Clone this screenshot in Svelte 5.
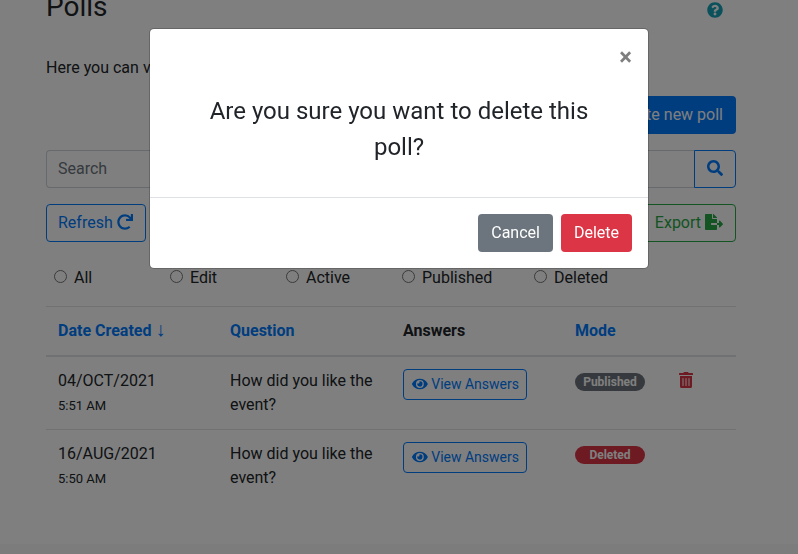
<script>
  const filters = ['All', 'Edit', 'Active', 'Published', 'Deleted'];
  const rows = [
    { date: '04/OCT/2021', time: '5:51 AM', mode: 'Published', cls: 'published', trash: true },
    { date: '16/AUG/2021', time: '5:50 AM', mode: 'Deleted', cls: 'deleted', trash: false }
  ];
</script>

<div class="page">
  <main class="container">
    <div class="title-row">
      <h1>Polls</h1>
      <svg class="help" viewBox="0 0 512 512"><path fill="currentColor" d="M504 256c0 136.997-111.043 248-248 248S8 392.997 8 256C8 119.083 119.043 8 256 8s248 111.083 248 248zM262.655 90c-54.497 0-89.255 22.957-116.549 63.758-3.536 5.286-2.353 12.415 2.715 16.258l34.699 26.31c5.205 3.947 12.621 3.008 16.665-2.122 17.864-22.658 30.113-35.797 57.303-35.797 20.429 0 45.698 13.148 45.698 32.958 0 14.976-12.363 22.667-32.534 33.976C247.128 238.528 216 254.941 216 296v4c0 6.627 5.373 12 12 12h56c6.627 0 12-5.373 12-12v-1.333c0-28.462 83.186-29.647 83.186-106.667 0-58.002-60.165-102-116.531-102zM256 338c-25.365 0-46 20.635-46 46 0 25.364 20.635 46 46 46s46-20.636 46-46c0-25.365-20.635-46-46-46z"/></svg>
    </div>
    <p class="intro">Here you can view and manage your polls.</p>
    <div class="create-row"><button class="btn solid">Create new poll</button></div>
    <div class="search">
      <input placeholder="Search" />
      <button class="btn outline search-btn" aria-label="Search">
        <svg class="ic16" viewBox="0 0 512 512"><path fill="currentColor" d="M505 442.7L405.3 343c-4.5-4.5-10.6-7-17-7H372c27.6-35.3 44-79.7 44-128C416 93.1 322.9 0 208 0S0 93.1 0 208s93.1 208 208 208c48.3 0 92.7-16.4 128-44v16.3c0 6.4 2.5 12.5 7 17l99.7 99.7c9.4 9.4 24.6 9.4 33.9 0l28.3-28.3c9.4-9.4 9.4-24.6.1-34zM208 336c-70.7 0-128-57.2-128-128 0-70.7 57.2-128 128-128 70.7 0 128 57.2 128 128 0 70.7-57.2 128-128 128z"/></svg>
      </button>
    </div>
    <div class="actions">
      <button class="btn outline refresh">Refresh
        <svg class="ic16" viewBox="0 0 512 512"><path fill="currentColor" d="M500.33 0h-47.41a12 12 0 0 0-12 12.57l4 82.76A247.42 247.42 0 0 0 256 8C119.34 8 7.9 119.53 8 256.19 8.1 393.07 119.1 504 256 504a247.1 247.1 0 0 0 166.18-63.91 12 12 0 0 0 .48-17.43l-34-34a12 12 0 0 0-16.38-.55A176 176 0 1 1 402.1 157.8l-101.53-4.87a12 12 0 0 0-12.57 12v47.41a12 12 0 0 0 12 12h200.33a12 12 0 0 0 12-12V12a12 12 0 0 0-12-12z"/></svg>
      </button>
      <button class="btn outline green">Export
        <svg class="ic18" viewBox="0 0 576 512"><path fill="currentColor" d="M384 121.9c0-6.3-2.5-12.4-7-16.9L279.1 7c-4.5-4.5-10.6-7-17-7H256v128h128zM571 308l-95.7-96.4c-10.1-10.1-27.4-3-27.4 11.3V288h-64v64h64v65.2c0 14.3 17.3 21.4 27.4 11.3L571 332c6.6-6.6 6.6-17.4 0-24zm-379 28v-32c0-8.8 7.2-16 16-16h176V160H248c-13.2 0-24-10.8-24-24V0H24C10.7 0 0 10.7 0 24v464c0 13.3 10.7 24 24 24h336c13.3 0 24-10.7 24-24V352H208c-8.8 0-16-7.2-16-16z"/></svg>
      </button>
    </div>
    <div class="filters">
      {#each filters as f}
        <label class="radio"><input type="radio" name="mode" /><span>{f}</span></label>
      {/each}
    </div>
    <table>
      <thead>
        <tr>
          <th class="link">Date Created <span class="arrow">↓</span></th>
          <th class="link">Question</th>
          <th>Answers</th>
          <th class="link">Mode</th>
          <th></th>
        </tr>
      </thead>
      <tbody>
        {#each rows as r}
          <tr>
            <td>{r.date}<small>{r.time}</small></td>
            <td>How did you like the event?</td>
            <td>
              <button class="btn outline sm">
                <svg class="eye" viewBox="0 0 576 512"><path fill="currentColor" d="M572.52 241.4C518.29 135.59 410.93 64 288 64S57.68 135.64 3.48 241.41a32.35 32.35 0 0 0 0 29.19C57.71 376.41 165.07 448 288 448s230.32-71.64 284.52-177.41a32.35 32.35 0 0 0 0-29.19zM288 400a144 144 0 1 1 144-144 143.93 143.93 0 0 1-144 144zm0-240a95.31 95.31 0 0 0-25.31 3.79 47.85 47.85 0 0 1-66.9 66.9A95.78 95.78 0 1 0 288 160z"/></svg>
                View Answers
              </button>
            </td>
            <td><span class="badge {r.cls}">{r.mode}</span></td>
            <td>
              {#if r.trash}
                <svg class="trash" viewBox="0 0 448 512"><path fill="currentColor" d="M32 464a48 48 0 0 0 48 48h288a48 48 0 0 0 48-48V128H32zm272-256a16 16 0 0 1 32 0v224a16 16 0 0 1-32 0zm-96 0a16 16 0 0 1 32 0v224a16 16 0 0 1-32 0zm-96 0a16 16 0 0 1 32 0v224a16 16 0 0 1-32 0zM432 32H312l-9.4-18.7A24 24 0 0 0 281.1 0H166.8a23.72 23.72 0 0 0-21.4 13.3L136 32H16A16 16 0 0 0 0 48v32a16 16 0 0 0 16 16h416a16 16 0 0 0 16-16V48a16 16 0 0 0-16-16z"/></svg>
              {/if}
            </td>
          </tr>
        {/each}
      </tbody>
    </table>
  </main>
  <footer></footer>
</div>

<div class="backdrop"></div>

<div class="dialog" role="dialog">
  <div class="dialog-head"><button class="close" aria-label="Close">×</button></div>
  <div class="dialog-body">Are you sure you want to delete this poll?</div>
  <div class="dialog-foot">
    <button class="btn grey">Cancel</button>
    <button class="btn red">Delete</button>
  </div>
</div>

<style>
  :global(body) {
    margin: 0;
    background: #fff;
    color: #212529;
    font-family: Roboto, "Liberation Sans", sans-serif;
    font-size: 16px;
    line-height: 24px;
    overflow: hidden;
  }
  .page {
    height: 554px;
    display: flex;
    flex-direction: column;
    overflow: hidden;
  }
  .container {
    flex: 1;
    padding: 0 62px 0 46px;
  }
  footer {
    height: 10px;
    background: #f8f9fa;
  }
  .title-row {
    display: flex;
    justify-content: space-between;
    align-items: flex-start;
    height: 50px;
  }
  h1 {
    margin: -14px 0 0;
    font-size: 28px;
    line-height: 42px;
    font-weight: 400;
  }
  .help {
    width: 16px;
    height: 16px;
    margin: 2px 13px 0 0;
    color: #17a2b8;
  }
  .intro {
    margin: 6px 0 0;
  }
  .create-row {
    display: flex;
    justify-content: flex-end;
    margin-top: 16px;
  }
  .btn {
    font: inherit;
    height: 38px;
    padding: 0 12px;
    border: 1px solid transparent;
    border-radius: 4px;
    background: transparent;
    white-space: nowrap;
  }
  .solid { background: #007bff; color: #fff; }
  .outline { border-color: #007bff; color: #007bff; }
  .refresh { padding-left: 11px; }
  .green { border-color: #28a745; color: #28a745; }
  .grey { background: #6c757d; color: #fff; }
  .red { background: #dc3545; color: #fff; }
  .search {
    display: flex;
    margin-top: 16px;
  }
  .search input {
    flex: 1;
    min-width: 0;
    height: 38px;
    box-sizing: border-box;
    padding: 0 12px 2px 11px;
    font: inherit;
    border: 1px solid #ced4da;
    border-right: 0;
    border-radius: 4px 0 0 4px;
    color: #495057;
  }
  .search input::placeholder { color: #6c757d; opacity: 1; }
  .search-btn {
    width: 42px;
    padding: 0;
    border-radius: 0 4px 4px 0;
  }
  .ic16 { width: 16px; height: 16px; vertical-align: -2px; }
  .ic18 { width: 18px; height: 16px; vertical-align: -2px; }
  .actions {
    display: flex;
    justify-content: space-between;
    margin-top: 16px;
  }
  .filters {
    display: grid;
    grid-template-columns: 116px 116px 116px 132px auto;
    margin-top: 23px;
    padding-left: 8px;
  }
  .radio {
    display: flex;
    align-items: flex-start;
    gap: 7px;
  }
  .radio input {
    width: 13px;
    height: 13px;
    margin: 5px 0 0;
  }
  .radio span { margin-top: 1px; }
  table {
    width: 690px;
    margin-top: 16px;
    border-collapse: collapse;
    table-layout: fixed;
  }
  th, td {
    padding: 12px;
    text-align: left;
    vertical-align: top;
  }
  th { box-sizing: border-box; }
  th:nth-child(1) { width: 172px; }
  th:nth-child(2) { width: 173px; }
  th:nth-child(3) { width: 172px; }
  th:nth-child(4) { width: 103px; }
  th {
    font-weight: 700;
    border-top: 1px solid #dee2e6;
    border-bottom: 2px solid #dee2e6;
  }
  td { border-bottom: 1px solid #dee2e6; }
  tbody tr:last-child td { border-bottom: 0; }
  .link { color: #007bff; }
  .arrow { font-weight: 400; font-size: 20px; line-height: 0; font-family: "Liberation Sans", sans-serif; }
  small {
    display: block;
    font-size: 13px;
    line-height: 26px;
    margin-bottom: -2px;
  }
  .sm {
    height: 31px;
    padding: 0 7px 0 8px;
    font-size: 14px;
    line-height: 21px;
  }
  .eye { width: 15.75px; height: 14px; vertical-align: -2px; }
  .badge {
    display: block;
    width: 70px;
    height: 18px;
    margin-top: 4px;
    border-radius: 9px;
    font-size: 12px;
    line-height: 18px;
    font-weight: 700;
    text-align: center;
    color: #fff;
  }
  .published { background: #6c757d; }
  .deleted { background: #dc3545; }
  .trash { display: block; width: 14px; height: 16px; color: #dc3545; margin: 3px 0 0 1px; }
  .backdrop {
    position: fixed;
    inset: 0;
    background: rgba(0, 0, 0, 0.5);
  }
  .dialog {
    position: fixed;
    left: 149px;
    top: 28px;
    width: 500px;
    height: 241px;
    box-sizing: border-box;
    background: #fff;
    border: 1px solid rgba(0, 0, 0, 0.2);
    background-clip: padding-box;
    border-radius: 5px;
    display: flex;
    flex-direction: column;
  }
  .dialog-head {
    display: flex;
    justify-content: flex-end;
    height: 56px;
    padding: 16px 16px 0;
    box-sizing: border-box;
  }
  .close {
    border: 0;
    padding: 0;
    background: none;
    font: 700 24px/24px Roboto, sans-serif;
    color: #000;
    opacity: 0.5;
    height: 24px;
  }
  .dialog-body {
    flex: 1;
    padding: 8px 48px 0;
    font-size: 24px;
    line-height: 36px;
    text-align: center;
  }
  .dialog-foot {
    display: flex;
    justify-content: flex-end;
    gap: 8px;
    padding: 16px;
    border-top: 1px solid #dee2e6;
  }
</style>
